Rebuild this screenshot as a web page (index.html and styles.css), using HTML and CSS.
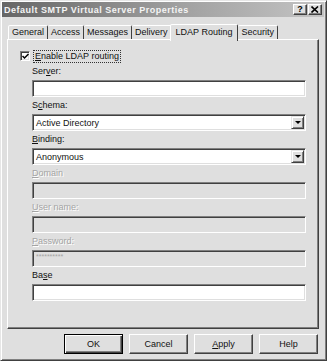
FILE: index.html
```html
<!DOCTYPE html>
<html lang="en">
<head>
    <meta charset="UTF-8">
    <title>Default SMTP Virtual Server Properties</title>
    <link rel="stylesheet" href="styles.css">
</head>
<body>
    <div class="window">
        <!-- Title bar -->
        <div class="titlebar">
            <span class="title">Default SMTP Virtual Server Properties</span>
            <div class="caption-btns">
                <span class="cap-btn help">?</span>
                <span class="cap-btn close">
                    <svg width="8" height="7" viewBox="0 0 8 7"><path d="M0.5 0.5 L7 6.5 M7 0.5 L0.5 6.5" stroke="#000" stroke-width="1.6"/></svg>
                </span>
            </div>
        </div>

        <div class="content">
            <!-- Tabs -->
            <div class="tabs">
                <div class="tab">General</div>
                <div class="tab">Access</div>
                <div class="tab">Messages</div>
                <div class="tab">Delivery</div>
                <div class="tab active">LDAP Routing</div>
                <div class="tab">Security</div>
            </div>

            <div class="panel">
                <div class="check-row">
                    <span class="checkbox">
                        <svg width="7" height="7" viewBox="0 0 7 7"><path d="M0.5 3 L2.5 5 L6.5 1" stroke="#000" stroke-width="1.5" fill="none"/></svg>
                    </span>
                    <span class="focus"><u>E</u>nable LDAP routing</span>
                </div>

                <div class="field">
                    <div class="field-label">Ser<u>v</u>er:</div>
                    <div class="textbox"></div>
                </div>
                <div class="field">
                    <div class="field-label">S<u>c</u>hema:</div>
                    <div class="textbox select"><span>Active Directory</span><span class="drop"><i></i></span></div>
                </div>
                <div class="field">
                    <div class="field-label"><u>B</u>inding:</div>
                    <div class="textbox select"><span>Anonymous</span><span class="drop"><i></i></span></div>
                </div>
                <div class="field disabled">
                    <div class="field-label"><u>D</u>omain</div>
                    <div class="textbox"></div>
                </div>
                <div class="field disabled">
                    <div class="field-label"><u>U</u>ser name:</div>
                    <div class="textbox"></div>
                </div>
                <div class="field disabled">
                    <div class="field-label"><u>P</u>assword:</div>
                    <div class="textbox"><span class="stars">**********</span></div>
                </div>
                <div class="field">
                    <div class="field-label">Ba<u>s</u>e</div>
                    <div class="textbox"></div>
                </div>
            </div>

            <!-- Dialog buttons -->
            <div class="buttons">
                <button class="btn default">OK</button>
                <button class="btn">Cancel</button>
                <button class="btn"><u>A</u>pply</button>
                <button class="btn">Help</button>
            </div>
        </div>
    </div>
</body>
</html>
```

FILE: styles.css
```css
* {
    margin: 0;
    padding: 0;
    box-sizing: border-box;
}

body {
    background-color: #dfdfdf;
    font-family: "Liberation Sans", Arial, sans-serif;
    font-size: 9px;
    color: #111;
}

u {
    text-decoration: underline;
    text-underline-offset: 1px;
}

/* Window frame */
.window {
    width: 327px;
    height: 361px;
    background-color: #dfdfdf;
    border: 1px solid;
    border-color: #e6e6e6 #404040 #404040 #e6e6e6;
    box-shadow: inset 1px 1px 0 #fff, inset -1px -1px 0 #808080;
    padding: 1px 2px 2px 1px;
    display: flex;
    flex-direction: column;
}

.titlebar {
    height: 15px;
    background: linear-gradient(to right, #666 0%, #a0a0a0 55%, #c4c4c4 100%);
    display: flex;
    align-items: center;
    justify-content: space-between;
    padding: 0 2px 0 2px;
}

.title {
    color: #f4f4f4;
    font-weight: bold;
    font-size: 9px;
    letter-spacing: 0.5px;
}

.caption-btns {
    display: flex;
    gap: 1px;
}

.cap-btn {
    width: 14px;
    height: 11px;
    background-color: #dfdfdf;
    border: 1px solid;
    border-color: #fff #404040 #404040 #fff;
    box-shadow: inset -1px -1px 0 #808080;
    display: flex;
    align-items: center;
    justify-content: center;
    font-weight: bold;
    font-size: 9px;
    line-height: 9px;
    color: #000;
}

.content {
    flex: 1;
    padding: 6px 5px 0 5px;
    display: flex;
    flex-direction: column;
}

/* Tabs */
.tabs {
    display: flex;
    align-items: flex-end;
    padding-left: 1px;
    height: 17px;
    position: relative;
    z-index: 1;
}

.tab {
    height: 14px;
    line-height: 12px;
    padding: 0 3px;
    border: 1px solid;
    border-bottom: none;
    border-color: #fff #404040 transparent #fff;
    border-radius: 2px 2px 0 0;
    background-color: #dfdfdf;
    white-space: nowrap;
    margin-bottom: 1px;
}

.tab + .tab {
    border-left: none;
}

.tab.active {
    height: 17px;
    line-height: 15px;
    padding: 0 5px;
    margin: 0 -1px -1px -2px;
    border-left: 1px solid #fff;
    position: relative;
}

.tab.active + .tab {
    margin-left: 1px;
}

/* Panel */
.panel {
    height: 290px;
    border: 1px solid;
    border-color: #fff #404040 #404040 #fff;
    box-shadow: inset -1px -1px 0 #808080;
    padding: 10px 12px 0 24px;
    margin-top: -1px;
}

.check-row {
    display: flex;
    align-items: center;
    height: 12px;
    margin-left: -12px;
    gap: 4px;
}

.checkbox {
    width: 10px;
    height: 10px;
    background-color: #fff;
    border: 1px solid;
    border-color: #808080 #fff #fff #808080;
    box-shadow: inset 1px 1px 0 #404040, inset -1px -1px 0 #dfdfdf;
    display: flex;
    align-items: center;
    justify-content: center;
}

.focus {
    outline: 1px dotted #333;
    padding: 0 1px;
    line-height: 11px;
}

.field {
    margin-top: 3px;
}

.field + .field {
    margin-top: 2px;
}

.field-label {
    height: 12px;
    line-height: 12px;
    margin-bottom: 3px;
}

.textbox {
    width: 274px;
    height: 17px;
    background-color: #fff;
    border: 1px solid;
    border-color: #808080 #fff #fff #808080;
    box-shadow: inset 1px 1px 0 #404040, inset -1px -1px 0 #dfdfdf;
    display: flex;
    align-items: center;
    padding: 0 3px;
}

.select {
    justify-content: space-between;
    padding-right: 1px;
}

.drop {
    width: 13px;
    height: 13px;
    background-color: #dfdfdf;
    border: 1px solid;
    border-color: #e6e6e6 #404040 #404040 #e6e6e6;
    box-shadow: inset 1px 1px 0 #fff, inset -1px -1px 0 #808080;
    display: flex;
    align-items: center;
    justify-content: center;
}

.drop i {
    width: 0;
    height: 0;
    border-left: 3px solid transparent;
    border-right: 3px solid transparent;
    border-top: 3px solid #000;
}

.disabled .field-label {
    color: #a4a4a4;
    text-shadow: 1px 1px 0 #fff;
}

.disabled .textbox {
    background-color: #dfdfdf;
}

.stars {
    font-size: 7px;
    color: #a4a4a4;
    align-self: flex-start;
    margin-top: 2px;
}

/* Buttons */
.buttons {
    display: flex;
    justify-content: flex-end;
    gap: 6px;
    margin-top: 5px;
    padding-right: 1px;
}

.btn {
    width: 59px;
    height: 20px;
    font-family: inherit;
    font-size: 9px;
    color: #111;
    background-color: #dfdfdf;
    border: 1px solid;
    border-color: #fff #404040 #404040 #fff;
    box-shadow: inset -1px -1px 0 #808080;
}

.btn.default {
    border: 1px solid #000;
    box-shadow: inset 1px 1px 0 #fff, inset -1px -1px 0 #404040, inset -2px -2px 0 #808080;
}
```
